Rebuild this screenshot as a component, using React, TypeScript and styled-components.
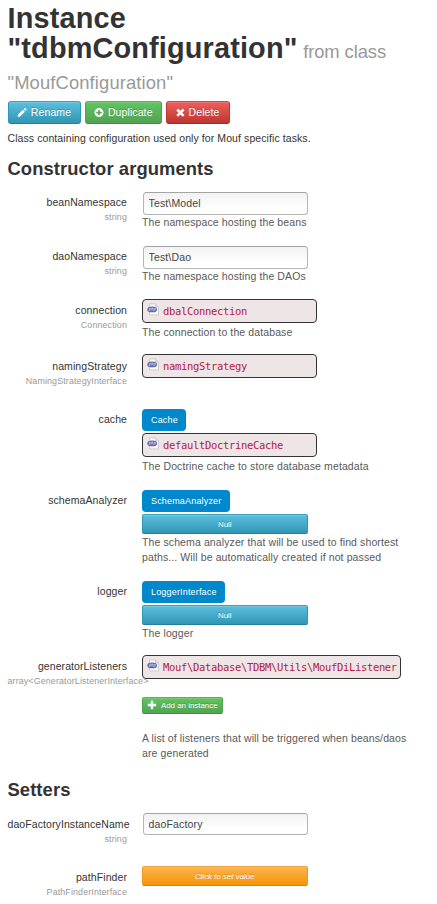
import React from 'react';
import styled, { createGlobalStyle, css } from 'styled-components';

const GlobalStyle = createGlobalStyle`
  * { box-sizing: border-box; }
  html, body { margin: 0; background: #fff; }
  body {
    font: 10.5px/15px "Liberation Sans", Arial, sans-serif;
    letter-spacing: 0.085px;
    color: #333;
    overflow: hidden;
  }
`;

const Page = styled.main`
  width: 437px;
  height: 904px;
  padding: 3px 7.5px 0;
  overflow: hidden;
`;

const Title = styled.h1`
  margin: 0;
  height: 93px;
  font-size: 28.9px;
  line-height: 30px;
  letter-spacing: 0.14px;
  word-spacing: -2.5px;
  white-space: nowrap;
`;

const TitleNote = styled.small`
  font-size: 18.4px;
  font-weight: 400;
  letter-spacing: -0.1px;
  word-spacing: 0;
  color: #999;
`;

const TitleTail = styled(TitleNote)`
  display: block;
  line-height: 32px;
  letter-spacing: 0.12px;
`;

const Toolbar = styled.div`
  display: flex;
  gap: 4px;
  margin-top: 5px;
`;

type Tone = 'info' | 'success' | 'danger' | 'warning';

const tones = {
  info: css`background: linear-gradient(#5bc0de, #2f96b4); border-color: #3ba0be #2f96b4 #24809c;`,
  success: css`background: linear-gradient(#62c462, #51a351); border-color: #57b257 #51a351 #438b43;`,
  danger: css`background: linear-gradient(#ee5f5b, #bd362f); border-color: #cf4b46 #bd362f #a22d27;`,
  warning: css`background: linear-gradient(#fbb450, #f89406); border-color: #eda33f #f09a1c #d98209;`,
};

const Button = styled.button<{ $tone: Tone; $width?: number }>`
  display: flex;
  align-items: center;
  justify-content: center;
  gap: 3.5px;
  width: ${({ $width }) => ($width ? `${$width}px` : 'auto')};
  height: 23px;
  padding: 0;
  border: 1px solid;
  border-radius: 3px;
  color: #fff;
  font: 10.5px/15px "Liberation Sans", Arial, sans-serif;
  letter-spacing: 0.1px;
  text-shadow: 0 -1px 0 rgba(0, 0, 0, 0.2);
  box-shadow: inset 0 1px 0 rgba(255, 255, 255, 0.15);
  white-space: nowrap;
  ${({ $tone }) => tones[$tone]}
`;

const WideButton = styled(Button)<{ $italic?: boolean }>`
  width: 165.5px;
  height: 20.5px;
  border-radius: 2px;
  font-size: 7.9px;
  letter-spacing: 0;
  font-style: ${({ $italic }) => ($italic ? 'italic' : 'normal')};
`;

const SmallButton = styled(Button)`
  width: 81px;
  height: 17px;
  margin-top: 18px;
  border-radius: 2px;
  font-size: 7.9px;
  letter-spacing: 0;
`;

const Intro = styled.p`
  margin: 7px 0 0;
`;

const SectionTitle = styled.h2<{ $top: number; $bottom: number }>`
  margin: ${({ $top, $bottom }) => `${$top}px 0 ${$bottom}px`};
  font-size: 18.4px;
  line-height: 30px;
`;

const Field = styled.div<{ $height: number }>`
  display: grid;
  grid-template-columns: 119.5px 1fr;
  column-gap: 15px;
  height: ${({ $height }) => $height}px;
`;

const Label = styled.div<{ $drop: number }>`
  display: flex;
  flex-direction: column;
  padding-top: ${({ $drop }) => 3 + $drop}px;
  text-align: right;
  white-space: nowrap;
`;

const TypeName = styled.span`
  font-size: 8.9px;
  letter-spacing: 0.13px;
  color: #999;
`;

const Control = styled.div`
  display: flex;
  flex-direction: column;
  align-items: flex-start;
`;

const TextInput = styled.input`
  width: 165.5px;
  height: 22.5px;
  margin-left: 0.5px;
  padding: 0 5px;
  border: 1px solid #b5b5b5;
  border-top-color: #a4a4a4;
  border-radius: 3.5px;
  background: linear-gradient(#f2f2f2, #fff 75%);
  color: #444;
  font: 10.5px/15px "Liberation Sans", Arial, sans-serif;
  letter-spacing: 0.15px;
`;

const Help = styled.p<{ $top?: number }>`
  margin: ${({ $top = 0 }) => $top}px 0 0;
  color: #595959;
  letter-spacing: 0.11px;
  white-space: pre-line;
`;

const InstanceBox = styled.div`
  display: flex;
  gap: 3px;
  min-width: 175px;
  height: 24px;
  padding: 3px 3px 0 4px;
  border: 1px solid #333;
  border-radius: 4px;
  background: #eee6e6;
  color: #b3203f;
  font: 10.5px/17px "DejaVu Sans Mono", monospace;
  letter-spacing: -0.325px;
  white-space: nowrap;
`;

const TypeTag = styled.span`
  height: 22.5px;
  margin-bottom: 1.5px;
  padding: 0 8.5px 0 9px;
  border-radius: 4px;
  background: #0088cc;
  color: #fff;
  font-size: 9px;
  letter-spacing: 0.17px;
  line-height: 22.5px;
`;

const PhpIcon = () => (
  <svg width="13" height="14" viewBox="0 0 13 14">
    <path d="M2.5 .9h6l3 3v8h-9z" fill="#fafafa" stroke="#c3c3c8" strokeWidth=".8" />
    <path d="M8.5 .9v3h3" fill="#ddd" stroke="#c3c3c8" strokeWidth=".6" />
    <ellipse cx="5.2" cy="6.4" rx="4.9" ry="2.9" fill="#6269a8" />
    <path
      d="M2.1 8.1l.5-2.8h1q.8.2.5 1-.2.7-1.6.6M4.7 7.3l.5-2.8M5.1 5.3q1.2-.3 1 .5l-.2 1.5M6.9 8.1l.5-2.8h1q.8.2.5 1-.2.7-1.6.6"
      fill="none"
      stroke="#dfe1f3"
      strokeWidth=".6"
    />
  </svg>
);

const PencilIcon = () => (
  <svg width="10" height="11" viewBox="0 0 10.5 11" fill="#fff">
    <path d="M.5 10.3l.7-2.8 5-5 2.1 2.1-5 5zM6.9 1.8L7.7 1q.6-.5 1.2 0l.9.9q.5.6 0 1.2l-.8.8z" />
  </svg>
);

const PlusCircleIcon = () => (
  <svg width="10" height="10" viewBox="0 0 10 10">
    <circle cx="5" cy="4.6" r="4.5" fill="#fff" />
    <path d="M5 1.9v5.4M2.3 4.6h5.4" stroke="#55a955" strokeWidth="1.6" />
  </svg>
);

const CrossIcon = () => (
  <svg width="9" height="10" viewBox="0 0 9 10">
    <path d="M1.2 1.5l6.4 6.4M7.6 1.5L1.2 7.9" stroke="#fff" strokeWidth="2.6" />
  </svg>
);

const PlusIcon = () => (
  <svg width="10" height="10" viewBox="0 0 10 10">
    <path d="M5 .8v8.4M.8 5h8.4" stroke="#fff" strokeWidth="2.3" />
  </svg>
);

type RowProps = {
  name: string;
  type?: string;
  height: number;
  drop?: number;
  children: React.ReactNode;
};

const Row = ({ name, type, height, drop = 0, children }: RowProps) => (
  <Field $height={height}>
    <Label $drop={drop}>
      <span>{name}</span>
      {type && <TypeName>{type}</TypeName>}
    </Label>
    <Control>{children}</Control>
  </Field>
);

const Instance = ({ name }: { name: string }) => (
  <InstanceBox>
    <PhpIcon />
    <span>{name}</span>
  </InstanceBox>
);

export default function App() {
  return (
    <Page>
      <GlobalStyle />
      <Title>
        Instance
        <br />
        "tdbmConfiguration" <TitleNote>from class</TitleNote>
        <TitleTail>"MoufConfiguration"</TitleTail>
      </Title>
      <Toolbar>
        <Button $tone="info" $width={73.5}><PencilIcon />Rename</Button>
        <Button $tone="success" $width={77}><PlusCircleIcon />Duplicate</Button>
        <Button $tone="danger" $width={63.5}><CrossIcon />Delete</Button>
      </Toolbar>
      <Intro>Class containing configuration used only for Mouf specific tasks.</Intro>

      <SectionTitle $top={7.5} $bottom={8.5}>Constructor arguments</SectionTitle>
      <Row name="beanNamespace" type="string" height={54}>
        <TextInput defaultValue={'Test\\Model'} />
        <Help $top={0.5}>The namespace hosting the beans</Help>
      </Row>
      <Row name="daoNamespace" type="string" height={52.9}>
        <TextInput defaultValue={'Test\\Dao'} />
        <Help $top={0.5}>The namespace hosting the DAOs</Help>
      </Row>
      <Row name="connection" type="Connection" height={55.5} drop={1}>
        <Instance name="dbalConnection" />
        <Help $top={2}>The connection to the database</Help>
      </Row>
      <Row name="namingStrategy" type="NamingStrategyInterface" height={54.5} drop={1.6}>
        <Instance name="namingStrategy" />
      </Row>
      <Row name="cache" height={81}>
        <TypeTag>Cache</TypeTag>
        <Instance name="defaultDoctrineCache" />
        <Help $top={2.2}>The Doctrine cache to store database metadata</Help>
      </Row>
      <Row name="schemaAnalyzer" height={91}>
        <TypeTag>SchemaAnalyzer</TypeTag>
        <WideButton $tone="info">Null</WideButton>
        <Help $top={0.8}>{'The schema analyzer that will be used to find shortest\npaths... Will be automatically created if not passed'}</Help>
      </Row>
      <Row name="logger" height={74}>
        <TypeTag>LoggerInterface</TypeTag>
        <WideButton $tone="info">Null</WideButton>
        <Help $top={0.8}>The logger</Help>
      </Row>
      <Row name="generatorListeners" type="array<GeneratorListenerInterface>" height={111.6} drop={1.2}>
        <Instance name={'Mouf\\Database\\TDBM\\Utils\\MoufDiListener'} />
        <SmallButton $tone="success"><PlusIcon />Add an instance</SmallButton>
        <Help $top={16.8}>{'A list of listeners that will be triggered when beans/daos\nare generated'}</Help>
      </Row>

      <SectionTitle $top={8.5} $bottom={8}>Setters</SectionTitle>
      <Row name="daoFactoryInstanceName" type="string" height={53} drop={0.8}>
        <TextInput defaultValue="daoFactory" />
      </Row>
      <Row name="pathFinder" type="PathFinderInterface" height={38} drop={0.8}>
        <WideButton $tone="warning" $italic>Click to set value</WideButton>
      </Row>
    </Page>
  );
}
